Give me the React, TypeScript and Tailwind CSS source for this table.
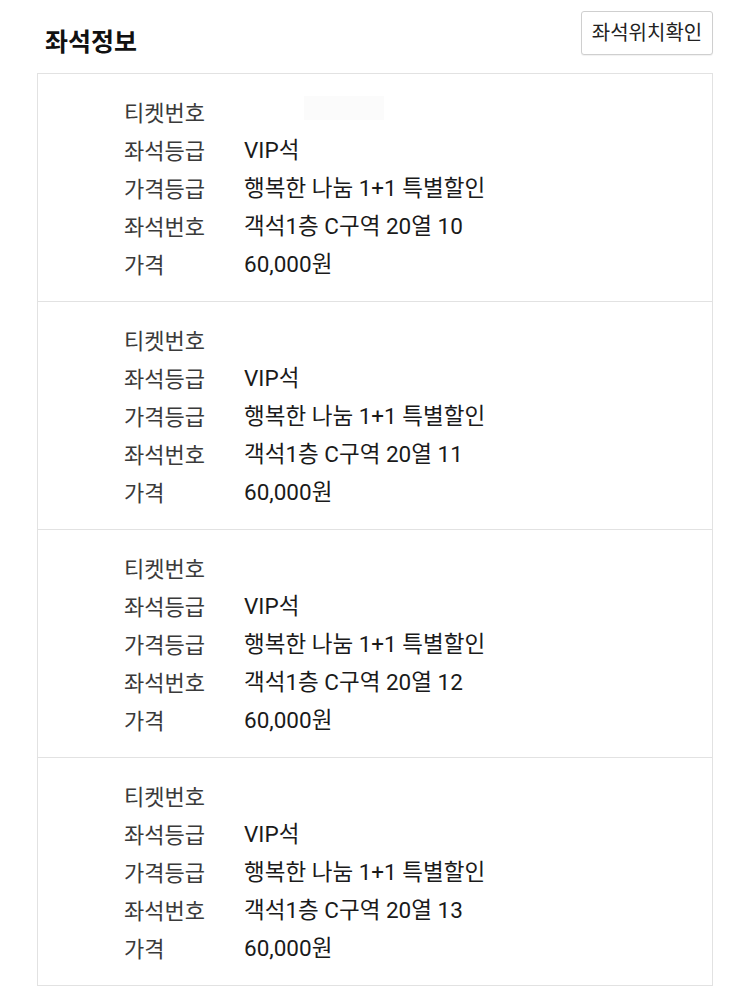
import React from "react";

const font = { fontFamily: 'Roboto, "Noto Sans CJK KR", "Noto Sans", sans-serif' };

const tickets = [
  { seat: "객석1층 C구역 20열 10" },
  { seat: "객석1층 C구역 20열 11" },
  { seat: "객석1층 C구역 20열 12" },
  { seat: "객석1층 C구역 20열 13" },
];

function Row({ label, value }: { label: string; value?: React.ReactNode }) {
  return (
    <div className="flex h-[38px] items-center">
      <div className="w-[120px] text-[22px] text-[#3a3a3a]">{label}</div>
      <div className="text-[22.5px] text-[#1a1a1a]">{value}</div>
    </div>
  );
}

export default function App() {
  return (
    <div className="min-h-[1003px] w-[750px] bg-white px-[37px]" style={font}>
      <div className="flex items-start justify-between">
        <h2 className="mt-[27px] ml-[8px] text-[25px] leading-[32px] font-bold text-[#111]">좌석정보</h2>
        <button className="mt-[11px] h-[44px] w-[132px] rounded-[3px] border border-[#cfcfcf] bg-white text-[20px] text-[#222] shadow-[0_1px_1px_rgba(0,0,0,0.06)]">
          좌석위치확인
        </button>
      </div>
      <div className="mt-[14px] border border-[#e2e2e2]">
        {tickets.map((t, i) => (
          <div
            key={i}
            className={`pt-[20px] pb-[17px] pl-[86px] ${i < tickets.length - 1 ? "border-b border-[#e2e2e2]" : ""}`}
          >
            <Row
              label="티켓번호"
              value={
                i === 0 ? (
                  <span className="ml-[60px] inline-block h-[24px] w-[80px] bg-[#fbfbfb]" />
                ) : null
              }
            />
            <Row label="좌석등급" value="VIP석" />
            <Row label="가격등급" value="행복한 나눔 1+1 특별할인" />
            <Row label="좌석번호" value={t.seat} />
            <Row label="가격" value="60,000원" />
          </div>
        ))}
      </div>
    </div>
  );
}
